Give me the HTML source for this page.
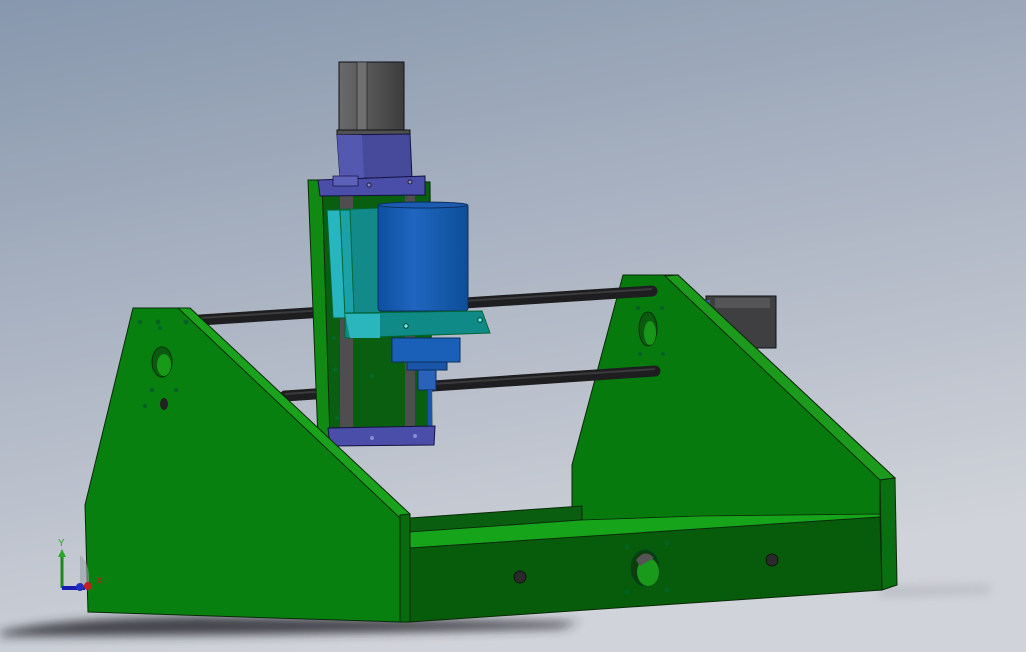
<!DOCTYPE html>
<html><head><style>
html,body{margin:0;padding:0;width:1026px;height:652px;overflow:hidden}
svg{display:block}
</style></head><body>
<svg width="1026" height="652" viewBox="0 0 1026 652" xmlns="http://www.w3.org/2000/svg">
<defs>
<linearGradient id="bg" x1="0" y1="0" x2="0.3" y2="1">
<stop offset="0" stop-color="#8797ad"/><stop offset="0.55" stop-color="#b0b8c6"/><stop offset="1" stop-color="#d0d3d9"/>
</linearGradient>
<filter id="bl" x="-20%" y="-200%" width="140%" height="500%"><feGaussianBlur stdDeviation="5"/></filter>
<linearGradient id="cyl" x1="0" y1="0" x2="1" y2="0">
<stop offset="0" stop-color="#0d4fa0"/><stop offset="0.4" stop-color="#1f66c0"/><stop offset="1" stop-color="#0e4e98"/>
</linearGradient>
<linearGradient id="mot" x1="0" y1="0" x2="1" y2="0">
<stop offset="0" stop-color="#6a6a6a"/><stop offset="0.5" stop-color="#555"/><stop offset="1" stop-color="#3c3c3c"/>
</linearGradient>
</defs>
<rect width="1026" height="652" fill="url(#bg)"/>
<!-- shadow -->
<path d="M0 632 Q60 618 200 616 L580 622 L560 628 Q300 636 0 636 Z" fill="#2a2c30" opacity="0.85" filter="url(#bl)"/>
<path d="M880 588 L990 586 L990 592 L880 596Z" fill="#8a8d92" opacity="0.4" filter="url(#bl)"/>

<!-- right motor -->
<rect x="706" y="296" width="70" height="52" fill="#3f3f42" stroke="#111" stroke-width="1"/>
<rect x="715" y="298" width="55" height="10" fill="#555"/>
<rect x="700" y="300" width="10" height="10" fill="#3a55c0"/>

<!-- right plate -->
<path d="M623 275 L678 275 L895 478 L880 478 L880 520 L572 520 L572 465 Z" fill="#077a0e" stroke="#0a2a08" stroke-width="1"/>
<path d="M665 276 L678 275 L895 478 L880 480 Z" fill="#1c9a1c" stroke="#0a2a08" stroke-width="1"/>
<path d="M880 480 L895 478 L897 585 L882 590 Z" fill="#0a6f10" stroke="#0a2a08" stroke-width="1"/>
<ellipse cx="648" cy="329" rx="9" ry="17" fill="#0a5a10" stroke="#063006"/>
<ellipse cx="650" cy="333" rx="6" ry="12" fill="#19961a"/>
<circle cx="638" cy="308" r="1.8" fill="#0b5d10" stroke="#063"/>
<circle cx="662" cy="308" r="1.8" fill="#0b5d10" stroke="#063"/>
<circle cx="640" cy="354" r="1.8" fill="#0b5d10" stroke="#063"/>
<circle cx="663" cy="354" r="1.8" fill="#0b5d10" stroke="#063"/>

<!-- rods -->
<path d="M200 320 L652 291" stroke="#1e1e20" stroke-width="11" stroke-linecap="round"/>
<path d="M200 318 L652 289" stroke="#3a3a3c" stroke-width="2"/>
<path d="M285 396 L655 371" stroke="#1e1e20" stroke-width="11" stroke-linecap="round"/>
<path d="M285 394 L655 369" stroke="#3a3a3c" stroke-width="2"/>

<!-- Z plate -->
<path d="M308 180 L335 180 L345 440 L318 440 Z" fill="#108a12" stroke="#0a2a08"/>
<path d="M322 180 L430 182 L432 440 L330 440 Z" fill="#0a5e10" stroke="#0a2a08"/>
<rect x="340" y="195" width="13" height="235" fill="#4e4e50"/>
<rect x="405" y="195" width="10" height="235" fill="#4e4e50"/>
<circle cx="334" cy="338" r="1.8" fill="#0d6b12" stroke="#063"/>
<circle cx="335" cy="370" r="1.8" fill="#0d6b12" stroke="#063"/>
<circle cx="372" cy="376" r="1.8" fill="#0d6b12" stroke="#063"/>
<circle cx="337" cy="418" r="1.8" fill="#0d6b12" stroke="#063"/>

<!-- Z motor -->
<rect x="339" y="62" width="65" height="71" fill="url(#mot)" stroke="#111"/>
<rect x="357" y="62" width="10" height="71" fill="#707070" stroke="#222" stroke-width="0.7"/>
<rect x="337" y="130" width="73" height="5" fill="#505050" stroke="#111"/>
<path d="M337 135 L410 134 L412 178 L340 178 Z" fill="#474a9a" stroke="#121240"/>
<path d="M337 135 L362 135 L364 178 L340 178Z" fill="#5558b0"/>
<path d="M318 180 L425 176 L425 195 L320 196 Z" fill="#4a4ea8" stroke="#121240"/>
<rect x="333" y="176" width="25" height="10" fill="#5c60b8" stroke="#121240" stroke-width="0.7"/>
<circle cx="369" cy="185" r="2" fill="#8a8ad0" stroke="#223"/>
<circle cx="410" cy="182" r="2" fill="#8a8ad0" stroke="#223"/>

<!-- cyan block -->
<path d="M327 210 L380 208 L380 318 L333 318 Z" fill="#138a8a" stroke="#063"/>
<path d="M327 210 L340 210 L346 318 L333 318Z" fill="#27b6c0" stroke="#063"/>
<path d="M340 210 L350 210 L355 338 L346 338Z" fill="#1aa2a8" stroke="#063"/>
<!-- spindle cylinder -->
<rect x="378" y="204" width="90" height="107" rx="3" fill="url(#cyl)" stroke="#0a2f60"/>
<ellipse cx="423" cy="205" rx="45" ry="3" fill="#1c5cb0" stroke="#0a2f60"/>
<!-- cyan bracket -->
<path d="M345 313 L482 311 L490 333 L345 338 Z" fill="#0f8a86" stroke="#063"/>
<path d="M345 314 L380 314 L380 338 L350 338Z" fill="#2bb5bc"/>
<circle cx="406" cy="326" r="2.2" fill="#6fd" stroke="#033"/>
<circle cx="480" cy="320" r="2.2" fill="#6fd" stroke="#033"/>
<!-- lower spindle -->
<rect x="392" y="338" width="68" height="24" fill="#1a60b8" stroke="#0a2f60"/>
<rect x="407" y="362" width="40" height="8" fill="#1a55a8" stroke="#0a2f60"/>
<rect x="418" y="370" width="18" height="20" fill="#2a62b8" stroke="#0a2f60"/>
<rect x="428" y="390" width="4" height="52" fill="#1d55b0"/>
<!-- bottom purple bracket -->
<path d="M328 428 L435 426 L434 445 L330 446 Z" fill="#4a4ea8" stroke="#121240"/>
<circle cx="372" cy="438" r="2" fill="#8a8ad0"/>
<circle cx="415" cy="436" r="2" fill="#8a8ad0"/>

<!-- back strip & beam top -->
<path d="M410 518 L582 506 L582 520 L410 532 Z" fill="#0a5e10" stroke="#0a2a08"/>
<path d="M410 532 L582 520 L700 516 L880 514 L880 518 L410 548 Z" fill="#16a41a" stroke="#0a2a08" stroke-width="0.8"/>
<!-- front beam -->
<path d="M410 548 L880 517 L882 590 L410 622 Z" fill="#075c0c" stroke="#0a2a08"/>
<circle cx="520" cy="577" r="6" fill="#2a2a2a" stroke="#111"/>
<circle cx="772" cy="560" r="6" fill="#2a2a2a" stroke="#111"/>
<ellipse cx="645" cy="568" rx="14" ry="18" fill="#0c3e0c" stroke="#042"/>
<ellipse cx="648" cy="572" rx="11" ry="14" fill="#1a9a1a"/>
<path d="M636 560 Q645 548 654 558 L640 566Z" fill="#555"/>
<circle cx="627" cy="547" r="1.8" fill="#0a5a10" stroke="#063"/>
<circle cx="667" cy="543" r="1.8" fill="#0a5a10" stroke="#063"/>
<circle cx="627" cy="592" r="1.8" fill="#0a5a10" stroke="#063"/>
<circle cx="667" cy="590" r="1.8" fill="#0a5a10" stroke="#063"/>

<!-- left plate -->
<path d="M85 505 L133 308 L190 308 L400 512 L400 622 L88 612 Z" fill="#078010" stroke="#0a2a08"/>
<path d="M178 308 L190 308 L410 514 L400 518 Z" fill="#1aa21c" stroke="#0a2a08"/>
<path d="M400 515 L410 514 L410 622 L400 622 Z" fill="#0a6a10" stroke="#0a2a08"/>
<ellipse cx="162" cy="362" rx="10" ry="15" fill="#0a5a10" stroke="#063006"/>
<ellipse cx="164" cy="365" rx="7" ry="11" fill="#179a18"/>
<ellipse cx="164" cy="404" rx="4" ry="6" fill="#222"/>
<circle cx="158" cy="322" r="2" fill="#0b5d10" stroke="#063"/>
<circle cx="186" cy="322" r="2" fill="#0b5d10" stroke="#063"/>
<circle cx="160" cy="328" r="1.6" fill="#0b5d10" stroke="#063"/>
<circle cx="152" cy="390" r="1.8" fill="#0b5d10" stroke="#063"/>
<circle cx="176" cy="390" r="1.8" fill="#0b5d10" stroke="#063"/>
<circle cx="145" cy="406" r="1.8" fill="#0b5d10" stroke="#063"/>
<circle cx="140" cy="322" r="1.8" fill="#0b5d10" stroke="#063"/>

<!-- triad -->
<path d="M80 555 Q92 565 88 590 L80 590Z" fill="#9aa0a8" opacity="0.6"/>
<line x1="62" y1="588" x2="62" y2="555" stroke="#1a8a1a" stroke-width="3"/>
<path d="M58 557 L62 549 L66 557Z" fill="#2aa82a"/>
<line x1="62" y1="588" x2="85" y2="588" stroke="#1a1ab0" stroke-width="4"/>
<circle cx="80" cy="587" r="4" fill="#2030c0"/>
<circle cx="88" cy="586" r="4" fill="#c02020"/>
<text x="58" y="546" font-family="Liberation Sans, sans-serif" font-size="10" fill="#2aa82a">Y</text>
<text x="96" y="584" font-family="Liberation Sans, sans-serif" font-size="10" fill="#c02020">X</text>
</svg>
</body></html>
